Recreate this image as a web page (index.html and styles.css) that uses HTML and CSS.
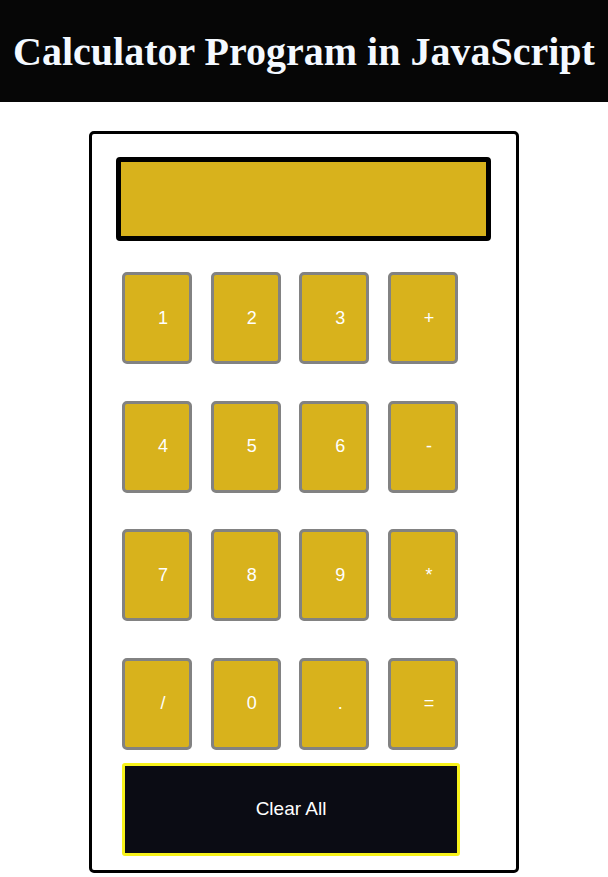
FILE: index.html
```html
<!DOCTYPE html>
<html>
<head>
<meta charset="utf-8">
<title>Calculator Program in JavaScript</title>
<link rel="stylesheet" href="styles.css">
</head>
<body>
<header class="header">
  <h1 class="title">Calculator Program in JavaScript</h1>
</header>
<main class="page">
  <div class="calc">
    <div class="display"></div>
    <div class="keys">
      <button class="key">1</button>
      <button class="key">2</button>
      <button class="key">3</button>
      <button class="key">+</button>
      <button class="key">4</button>
      <button class="key">5</button>
      <button class="key">6</button>
      <button class="key">-</button>
      <button class="key">7</button>
      <button class="key">8</button>
      <button class="key">9</button>
      <button class="key">*</button>
      <button class="key">/</button>
      <button class="key">0</button>
      <button class="key">.</button>
      <button class="key">=</button>
    </div>
    <button class="clear">Clear All</button>
  </div>
</main>
</body>
</html>
```
FILE: styles.css
```css
html, body {
  margin: 0;
  padding: 0;
  background: #ffffff;
}
.header {
  background: #060606;
  height: 102px;
  display: flex;
  align-items: center;
  justify-content: center;
}
.title {
  margin: 0;
  color: #f4f9ff;
  font-family: "Liberation Serif", "Times New Roman", serif;
  font-weight: bold;
  font-size: 40px;
  line-height: 1;
  white-space: nowrap;
  padding-top: 2px;
}
.page {
  display: flex;
  justify-content: center;
  padding-top: 29px;
}
.calc {
  box-sizing: border-box;
  width: 430px;
  height: 742px;
  border: 3px solid #000;
  border-radius: 5px;
  padding: 23px 0 0 24px;
  display: flex;
  flex-direction: column;
}
.display {
  box-sizing: border-box;
  width: 375px;
  height: 84px;
  background: #d8b21c;
  border: 5px solid #000;
  border-radius: 4px;
}
.keys {
  margin: 31px 0 0 6px;
  display: grid;
  grid-template-columns: repeat(4, 70px);
  grid-auto-rows: 92px;
  column-gap: 18.7px;
  row-gap: 36.5px;
}
.key {
  box-sizing: border-box;
  width: 70px;
  height: 92px;
  background: #d8b21c;
  border: 3px solid #828282;
  border-radius: 5px;
  color: #ffffff;
  font-family: "Liberation Sans", Arial, sans-serif;
  font-size: 18px;
  padding: 0 0 0 12px;
  margin: 0;
}
.clear {
  box-sizing: border-box;
  margin: 13px 0 0 6px;
  width: 338px;
  height: 93px;
  background: #0b0c14;
  border: 3px solid #f7f21b;
  border-radius: 3px;
  color: #ffffff;
  font-family: "Liberation Sans", Arial, sans-serif;
  font-size: 19px;
  padding: 0;
}
```
